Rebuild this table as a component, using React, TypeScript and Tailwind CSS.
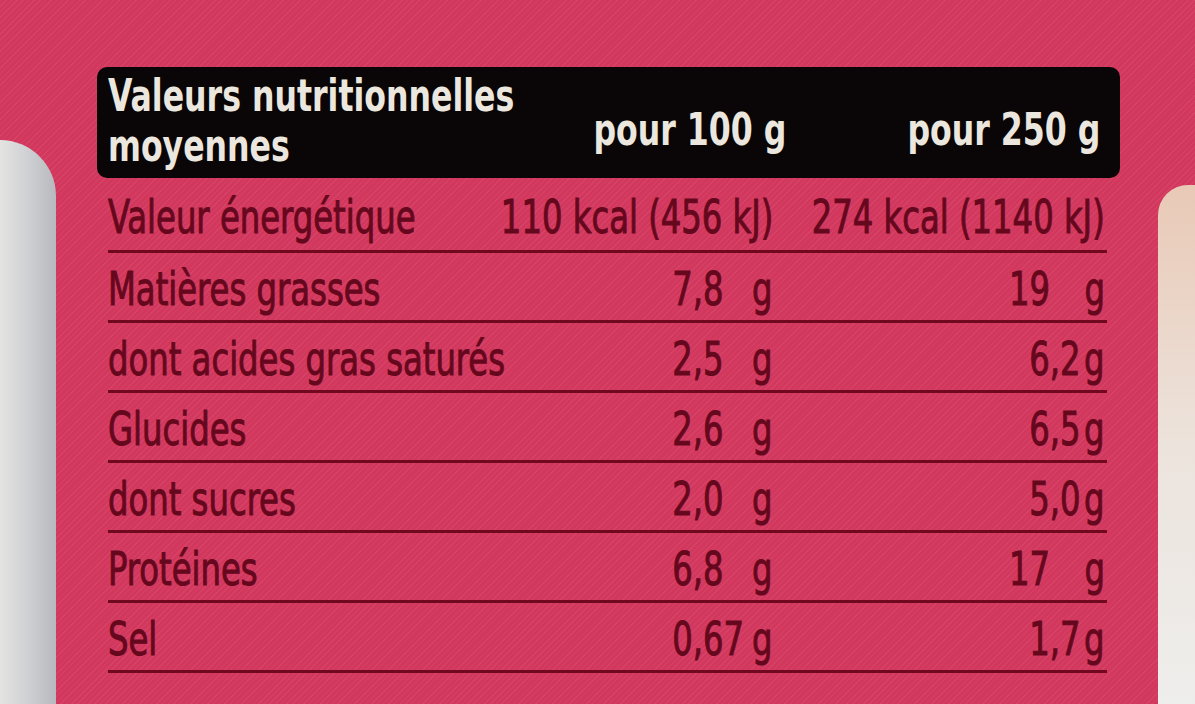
import React from 'react'

type Amt = { int: string; dec?: string }

type Row = {
  label: string
  a: Amt
  b: Amt
}

const rows: Row[] = [
  { label: 'Matières grasses', a: { int: '7', dec: ',8' }, b: { int: '19' } },
  { label: 'dont acides gras saturés', a: { int: '2', dec: ',5' }, b: { int: '6', dec: ',2' } },
  { label: 'Glucides', a: { int: '2', dec: ',6' }, b: { int: '6', dec: ',5' } },
  { label: 'dont sucres', a: { int: '2', dec: ',0' }, b: { int: '5', dec: ',0' } },
  { label: 'Protéines', a: { int: '6', dec: ',8' }, b: { int: '17' } },
  { label: 'Sel', a: { int: '0', dec: ',67' }, b: { int: '1', dec: ',7' } },
]

// the pack prints in a condensed face, so the wider local font gets squeezed
const squeezeLeft = 'inline-block origin-left scale-x-[0.78] whitespace-nowrap'
const squeezeRight = 'inline-block shrink-0 origin-right scale-x-[0.78] whitespace-nowrap'

// aligns on the decimal comma, like the tab stops on the pack
function Amount({ v, decWidth }: { v: Amt; decWidth: string }) {
  return (
    <span className={`${squeezeRight} inline-flex`}>
      <span>{v.int}</span>
      <span className={`${decWidth} text-left`}>{v.dec ?? ''}</span>
      <span>g</span>
    </span>
  )
}

export default function App() {
  return (
    <div className="flex h-[704px] w-[1195px] overflow-hidden bg-[#d2385e] bg-[image:repeating-linear-gradient(135deg,rgba(255,190,205,0.08)_0px,rgba(255,190,205,0.08)_1px,transparent_1px,transparent_4px)] font-['DejaVu_Sans_Condensed','DejaVu_Sans',sans-serif] text-[#66081d]">
      {/* grey backdrop on the left */}
      <div className="flex w-[56px] shrink-0 flex-col">
        <div className="h-[140px] shrink-0" />
        <div className="flex-1 rounded-tr-[90px] bg-gradient-to-r from-[#e4e4e2] via-[#cfd0d3] to-[#b7b9be]" />
      </div>

      <div className="flex-1 pt-[67px] pl-[41px]">
        <div className="w-[1023px]">
          {/* header */}
          <div className="flex h-[111px] rounded-[10px] bg-[#0a0506] pl-[11px] text-[45px] font-bold leading-[50px] text-[#ebe7df]">
            <div className="min-w-0 flex-1 pt-[4px]">
              <div className={squeezeLeft}>Valeurs nutritionnelles</div>
              <div className={squeezeLeft}>moyennes</div>
            </div>
            <div className="flex justify-end pt-[38px]">
              <span className={squeezeRight}>pour 100 g</span>
            </div>
            <div className="flex w-[334px] justify-end pt-[38px] pr-[20px]">
              <span className={squeezeRight}>pour 250 g</span>
            </div>
          </div>

          {/* table */}
          <div className="mr-[13px] ml-[11px] text-[46px] leading-none [-webkit-text-stroke:1px_#66081d]">
            <div className="flex h-[75px] items-center border-b-[3px] border-[#700920] pt-[6px]">
              <div className="min-w-0 flex-1">
                <span className={squeezeLeft}>Valeur énergétique</span>
              </div>
              <div className="flex justify-end">
                <span className={squeezeRight}>110 kcal (456 kJ)</span>
              </div>
              <div className="flex w-[334px] justify-end pr-[2px]">
                <span className={squeezeRight}>274 kcal (1140 kJ)</span>
              </div>
            </div>
            {rows.map((r) => (
              <div key={r.label} className="flex h-[70px] items-center border-b-[3px] border-[#700920] pt-[5px]">
                <div className="min-w-0 flex-1">
                  <span className={squeezeLeft}>{r.label}</span>
                </div>
                <div className="flex justify-end">
                  <Amount v={r.a} decWidth="w-[76px]" />
                </div>
                <div className="flex w-[334px] justify-end pr-[2px]">
                  <Amount v={r.b} decWidth="w-[44px]" />
                </div>
              </div>
            ))}
          </div>
        </div>
      </div>

      {/* light backdrop on the right */}
      <div className="flex w-[37px] shrink-0 flex-col">
        <div className="h-[185px] shrink-0" />
        <div className="flex-1 rounded-tl-[30px] bg-gradient-to-b from-[#e9c9b6] via-[#ece3dc] to-[#eeeeec]" />
      </div>
    </div>
  )
}
